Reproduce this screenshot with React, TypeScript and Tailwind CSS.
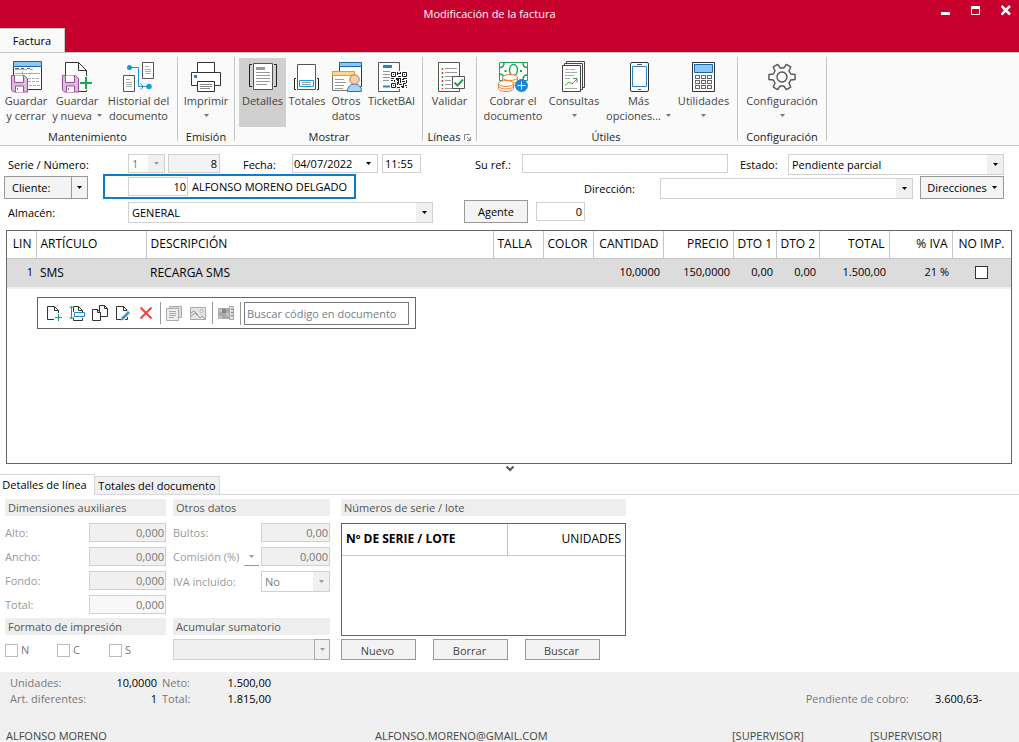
import type { ReactNode } from "react"
import clsx from "clsx"

// ---------------------------------------------------------------- icons

function Icon({ size = 32, children }: { size?: number; children: ReactNode }) {
  return (
    <svg width={size} height={size} viewBox={`0 0 ${size} ${size}`} fill="none" className="shrink-0" aria-hidden="true">
      {children}
    </svg>
  )
}

function Floppy() {
  return (
    <g stroke="#9c4f9f">
      <path d="M1.500 14.500h13l3 3v13.500h-14l-2-2z" fill="#dfbadf" />
      <path d="M4.500 14.500v7h9v-7" fill="#fff" />
      <path d="M5.500 31v-6h8v6" fill="#fff" />
      <path d="M7.500 27v2" stroke="#777" />
    </g>
  )
}

function SaveCloseIcon() {
  return (
    <Icon>
      <path d="M3.500 5.500v23h28v-23" fill="#fff" stroke="#333" />
      <path d="M3.500.5h28v5h-28z" fill="#8fc6ee" stroke="#1565b0" />
      <path d="M5 8.500h12M20 8.500h3M5 12.500h25M12.500 10v8" stroke="#aaa" />
      <path d="M5 7.500h4M11 7.500h3M17 7.500h3" stroke="#666" />
      <path d="M18 17.500h12M18 20.500h12M19 24.500h11" stroke="#aaa" strokeDasharray="3 1" />
      <Floppy />
    </Icon>
  )
}

function SaveNewIcon() {
  return (
    <Icon>
      <path d="M4.500 14v-12.500h13l8 8v21h-8" fill="#fff" stroke="#333" />
      <path d="M17.500 1.500v8h8z" fill="#fff" stroke="#333" />
      <Floppy />
      <path d="M18.500 22h13M25 15v14" stroke="#fafafa" strokeWidth="4" />
      <path d="M19 22h12M25 16v12" stroke="#18a754" strokeWidth="2" />
    </Icon>
  )
}

function HistoryIcon() {
  return (
    <Icon>
      <path d="M19.500 1.500h11v16h-11zM.5 14.500h11v16h-11z" fill="#fff" stroke="#555" />
      <path d="M22 5.500h4M22 8.500h6M22 10.500h6M22 12.500h6M3 18.500h4M3 21.500h6M3 23.500h6M3 25.500h6" stroke="#aaa" />
      <path d="M6.500 6.500h9v19h9M17.500 22.500l3 3-3 3" stroke="#129bdb" />
      <circle cx="6.500" cy="6.500" r="2.500" fill="#129bdb" />
      <circle cx="26" cy="25.500" r="2.700" fill="#129bdb" />
    </Icon>
  )
}

function PrintIcon() {
  return (
    <Icon>
      <path d="M7.500 1.500h17v10h-17zM1.500 11.500h29v13h-29z" fill="#fff" stroke="#333" />
      <path d="M7.500 20.500h17v10h-17z" fill="#fff" stroke="#333" />
      <path d="M10 23.500h12M10 25.500h12M10 27.500h10" stroke="#888" />
      <path d="M4 14h3v3H4z" fill="#1f86cf" />
    </Icon>
  )
}

function DetailsIcon() {
  return (
    <Icon>
      <path d="M6.500 2.500h19v26h-19z" fill="#fff" stroke="#555" />
      <path d="M5 3.500H2.500v22H5M27 3.500h2.500v22H27" stroke="#222" />
      <path d="M9 6h9v3H9z" fill="#999" />
      <path d="M9 11.500h14M9 14.500h14M9 17.500h14M9 20.500h14M9 23.500h11" stroke="#999" />
    </Icon>
  )
}

function TotalsIcon() {
  return (
    <Icon>
      <path d="M6.500 3.500h18v25h-18z" fill="#fff" stroke="#555" />
      <path d="M5 17.500H3.500v11H5M26 17.500h1.500v11H26" stroke="#222" />
      <path d="M8.500 19.500h14v6h-14z" stroke="#129bdb" />
      <path d="M11 21.500h9M11 23.500h9" stroke="#999" />
    </Icon>
  )
}

function OtherDataIcon() {
  return (
    <Icon>
      <path d="M9.500 5.500h22v20h-22z" fill="#fff" stroke="#333" />
      <path d="M9.500 1.500h22v4h-22z" fill="#8fc6ee" stroke="#1565b0" />
      <path d="M2.500 10.500h22v19h-22z" fill="#fff" stroke="#777" />
      <path d="M2.500 10.500h22v4h-22z" fill="#fbd98b" stroke="#d9a13a" />
      <path d="M5 18.500h9M5 21.500h11M5 24.500h9M5 27.500h8" stroke="#999" />
      <path d="M17.500 30.500c0-5 3-7.500 7-7.500s7 2.500 7 7.500z" fill="#a9d3f2" stroke="#2d77b5" />
      <circle cx="24.500" cy="18.500" r="4.700" fill="#f9cfb2" stroke="#b8734c" />
    </Icon>
  )
}

function TicketBaiIcon() {
  return (
    <Icon>
      <path d="M2.500 1.500h21v29h-21z" fill="#fff" stroke="#555" />
      <path d="M7 4h9v3H7z" fill="#1f86cf" />
      <path d="M7 10.500h11M7 13.500h8M7 16.500h7M7 19.500h6" stroke="#999" />
      <path d="M7 25.500h8" stroke="#1f86cf" strokeWidth="2" />
      <path d="M14 10h18v18H14z" fill="#fff" />
      <g stroke="#222">
        <path d="M15.500 11.500h4v4h-4zM26.500 11.500h4v4h-4zM15.500 22.500h4v4h-4z" />
        <path d="M17 13.500h1M28 13.500h1M17 24.500h1M21.500 11v3M24.500 11v2M22 15.500h3M15 17.500h3M20 17.500h5M27 17.500h4M15 19.500h2M18.500 19v2M21 19.500h2M24.500 18v4M26 20.500h3M30.500 19v3M21.500 21v3M23 23.500h3M27.500 22v3M29 24.500h2M21 26.500h3M26 26.500h2M30 26.500h1" />
        <path d="M20 18.500h3M26 18.500h2M22.500 19v4M28 22.500h2M25 25.500h3M22 12.500h2" />
      </g>
    </Icon>
  )
}

function ValidateIcon() {
  return (
    <Icon>
      <path d="M4.500 1.500h21v29h-21z" fill="#fff" stroke="#555" />
      <path d="M11 7.500h12M11 11.500h12M11 15.500h8M11 19.500h6M11 23.500h6M11 27.500h10" stroke="#999" />
      <path d="M8.500 7v2M8.500 15v2M8.500 23v2" stroke="#18a754" strokeWidth="1.500" />
      <path d="M8.500 11v2M8.500 19v2M8.500 27v1" stroke="#d23" strokeWidth="1.500" />
      <path d="M18.500 15.500h12v12h-12z" fill="#fff" stroke="#555" />
      <path d="M20.500 21.500l3 3 5.500-6" stroke="#18a754" strokeWidth="2" />
    </Icon>
  )
}

function CashIcon() {
  return (
    <Icon>
      <path d="M2.500 1.500h28v18h-28z" fill="#fff" stroke="#18a754" />
      <path d="M3 6.500c3 0 4-2 4-4.500M30 6.500c-3 0-4-2-4-4.500M3 13c2 0 3 1 3.500 2.500M30 14c-3 0-4 2-4 5" stroke="#18a754" strokeWidth="1.500" />
      <ellipse cx="16.500" cy="9" rx="4" ry="5.500" stroke="#18a754" strokeWidth="1.500" />
      <path d="M7.500 9h2v2h-2zM23 9h2v2h-2z" fill="#18a754" />
      <g fill="#fff" stroke="#ee7d31">
        <path d="M5.500 16.500v5.500c1 4 14 4 15 0v-5.500z" />
        <path d="M5.500 19.500c1 4 14 4 15 0" />
        <ellipse cx="13" cy="16.500" rx="7.500" ry="3" />
        <path d="M1.500 22.500v5c1 4 14 4 15 0v-5z" />
        <path d="M1.500 25c1 4 14 4 15 0" />
        <ellipse cx="9" cy="22.500" rx="7.500" ry="3" />
      </g>
      <circle cx="24.500" cy="24.500" r="6.500" fill="#1f86cf" />
      <path d="M20.500 24.500h8M24.500 20.500v8" stroke="#fff" />
    </Icon>
  )
}

function ReportsIcon() {
  return (
    <Icon>
      <path d="M8.500.5h18v26h-18z" fill="#fff" stroke="#444" />
      <path d="M6.500 2.500h18v26h-18z" fill="#fff" stroke="#444" />
      <path d="M4.500 4.500h18v26h-18z" fill="#fff" stroke="#444" />
      <path d="M7 8.500h4M12 8.500h5M7 11.500h12M7 14.500h9M7 17.500h5M7 27.500h12" stroke="#aaa" />
      <path d="M7 24.500l4-3.500 3 2 5-5M15 17.500h4v4" stroke="#3aaa35" />
    </Icon>
  )
}

function PhoneIcon() {
  return (
    <Icon>
      <rect x="7.500" y="1.500" width="18" height="29" rx="1.500" fill="#fff" stroke="#333" />
      <path d="M9.500 5.500h14v20h-14z" stroke="#1f86cf" />
      <path d="M14 3.500h5M15 28.500h3" stroke="#555" />
    </Icon>
  )
}

function CalculatorIcon() {
  return (
    <Icon>
      <path d="M4.500 1.500h22v29h-22z" fill="#fff" stroke="#333" />
      <path d="M6.500 3.500h18v8h-18z" fill="#8fc6ee" stroke="#1565b0" />
      {[14.5, 19.5, 24.5].map((y) =>
        [7.5, 13.5, 19.5].map((x) => <rect key={`${x}-${y}`} x={x} y={y} width="4" height="3" stroke="#666" />),
      )}
    </Icon>
  )
}

// Six-toothed gear outline
const gearPath = (() => {
  const points: string[] = []
  for (let i = 0; i < 6; i++) {
    const steps: [number, number][] = [[-19, 9.2], [-11, 13.3], [11, 13.3], [19, 9.2]]
    for (const [angle, radius] of steps) {
      const a = ((i * 60 + angle) * Math.PI) / 180
      points.push(`${(16 + radius * Math.cos(a)).toFixed(2)} ${(16 + radius * Math.sin(a)).toFixed(2)}`)
    }
  }
  return `M${points.join("L")}Z`
})()

function GearIcon() {
  return (
    <Icon>
      <path d={gearPath} stroke="#555" strokeWidth="1.400" strokeLinejoin="round" />
      <circle cx="16" cy="16" r="5" stroke="#555" strokeWidth="1.400" />
    </Icon>
  )
}

function Caret({ className = "text-black" }: { className?: string }) {
  return (
    <svg width="5" height="3" viewBox="0 0 5 3" className={clsx("shrink-0", className)} aria-hidden="true">
      <path d="M0 0h5L2.500 3z" fill="currentColor" />
    </svg>
  )
}

// ---------------------------------------------------------------- ribbon

type RibbonItem = {
  lines: string[]
  icon: ReactNode
  width: string
  caret?: boolean
  active?: boolean
}

type RibbonGroupData = { title: string; items: RibbonItem[]; launcher?: boolean; padding: string }

const ribbon: RibbonGroupData[] = [
  {
    title: "Mantenimiento",
    padding: "pr-[2px]",
    items: [
      { lines: ["Guardar", "y cerrar"], icon: <SaveCloseIcon />, width: "w-[52px]" },
      { lines: ["Guardar", "y nueva"], icon: <SaveNewIcon />, width: "w-[50px]", caret: true },
      { lines: ["Historial del", "documento"], icon: <HistoryIcon />, width: "w-[73px]" },
    ],
  },
  {
    title: "Emisión",
    padding: "px-1",
    items: [{ lines: ["Imprimir"], icon: <PrintIcon />, width: "w-[48px]", caret: true }],
  },
  {
    title: "Mostrar",
    padding: "pl-1 pr-[3px]",
    items: [
      { lines: ["Detalles"], icon: <DetailsIcon />, width: "w-[47px]", active: true },
      { lines: ["Totales"], icon: <TotalsIcon />, width: "w-[42px]" },
      { lines: ["Otros", "datos"], icon: <OtherDataIcon />, width: "w-[36px]" },
      { lines: ["TicketBAI"], icon: <TicketBaiIcon />, width: "w-[55px]" },
    ],
  },
  {
    title: "Líneas",
    padding: "px-1",
    launcher: true,
    items: [{ lines: ["Validar"], icon: <ValidateIcon />, width: "w-[45px]" }],
  },
  {
    title: "Útiles",
    padding: "pl-[3px] pr-[5px]",
    items: [
      { lines: ["Cobrar el", "documento"], icon: <CashIcon />, width: "w-[66px]" },
      { lines: ["Consultas"], icon: <ReportsIcon />, width: "w-[56px]", caret: true },
      { lines: ["Más", "opciones..."], icon: <PhoneIcon />, width: "w-[73px]", caret: true },
      { lines: ["Utilidades"], icon: <CalculatorIcon />, width: "w-[57px]", caret: true },
    ],
  },
  {
    title: "Configuración",
    padding: "px-1",
    items: [{ lines: ["Configuración"], icon: <GearIcon />, width: "w-[80px]", caret: true }],
  },
]

function RibbonButton({ item }: { item: RibbonItem }) {
  return (
    <button
      type="button"
      className={clsx(
        "flex h-[69px] flex-col items-center whitespace-nowrap pt-[3px] leading-[15px] text-[#444]",
        item.width,
        item.active && "bg-[#d0d0d0]",
      )}
    >
      {item.icon}
      <span>{item.lines[0]}</span>
      <span className="flex h-[15px] items-center gap-[5px]">
        {item.lines[1]}
        {item.caret && <Caret className="text-[#777]" />}
      </span>
    </button>
  )
}

function Ribbon() {
  return (
    <nav className="flex h-[94px] border-y border-[#c6c6c6] bg-[#fafafa] py-1">
      {ribbon.map((group) => (
        <section key={group.title} className={clsx("flex flex-col border-r border-[#c6c6c6] pt-px", group.padding)}>
          <div className="flex">
            {group.items.map((item) => (
              <RibbonButton key={item.lines.join(" ")} item={item} />
            ))}
          </div>
          <h2 className="flex items-center justify-center gap-1 pt-[2px] leading-4 text-[#222]">
            {group.title}
            {group.launcher && (
              <button type="button" aria-label="Más opciones de líneas">
                <svg width="7" height="7" viewBox="0 0 7 7" fill="none" stroke="#888">
                  <path d="M.5 6V.5H6M3 3l3.500 3.500M6.500 3v3.500H3" />
                </svg>
              </button>
            )}
          </h2>
        </section>
      ))}
    </nav>
  )
}

// ---------------------------------------------------------------- form controls

const fieldClass = "h-[19px] border border-[#d0d0d0] px-[2px] leading-4 outline-none"
const buttonClass = "border border-[#999] bg-[#f3f3f3]"

type ComboProps = { id: string; value: string; className?: string; disabled?: boolean; label?: string; boxed?: boolean }

function Combo({ id, value, className, disabled, label, boxed }: ComboProps) {
  return (
    <span className={clsx("relative flex h-[21px] border border-[#d0d0d0] bg-white", className)}>
      <select
        id={id}
        aria-label={label}
        disabled={disabled}
        defaultValue={value}
        className={clsx("h-full w-full appearance-none pl-[3px] outline-none", disabled && "text-[#777] opacity-100")}
      >
        <option>{value}</option>
      </select>
      <span
        className={clsx(
          "pointer-events-none absolute right-0 flex w-4 items-center justify-center bg-[#f0f0f0]",
          boxed ? "-inset-y-px -mr-px border border-[#aaa]" : "inset-y-0",
        )}
      >
        <Caret className={disabled ? "text-[#999]" : "text-black"} />
      </span>
    </span>
  )
}

function InvoiceForm() {
  return (
    <form className="flex flex-col pl-1 pr-[15px] pt-2">
      <div className="flex h-5 items-start">
        <label htmlFor="serie" className="w-[124px] pl-1 leading-[22px]">Serie / Número:</label>
        <Combo id="serie" value="1" disabled className="h-[19px]! w-[37px]" />
        <input aria-label="Número" defaultValue="8" readOnly className={clsx(fieldClass, "ml-[3px] w-[52px] bg-[#f3f3f3] text-right")} />
        <label htmlFor="fecha" className="ml-[23px] w-[49px] leading-[22px]">Fecha:</label>
        <span className="flex h-[19px] w-[86px] border border-[#d0d0d0]">
          <input id="fecha" defaultValue="04/07/2022" className="w-full min-w-0 pl-px leading-4 outline-none" />
          <button type="button" aria-label="Abrir calendario" className="flex w-[18px] shrink-0 items-center justify-center">
            <Caret />
          </button>
        </span>
        <input aria-label="Hora" defaultValue="11:55" className={clsx(fieldClass, "ml-1 w-[39px]")} />
        <label htmlFor="ref" className="ml-[54px] w-[47px] leading-[22px]">Su ref.:</label>
        <input id="ref" className={clsx(fieldClass, "min-w-0 flex-1")} />
        <label htmlFor="estado" className="ml-3 w-12 leading-[22px]">Estado:</label>
        <Combo id="estado" value="Pendiente parcial" className="w-[216px]" />
      </div>

      <div className="flex h-[25px] items-end">
        <span className={clsx(buttonClass, "flex h-[23px] w-[84px]")}>
          <button type="button" className="flex-1 pl-[7px] text-left">Cliente:</button>
          <button type="button" aria-label="Opciones de cliente" className="flex w-4 items-center justify-center border-l border-[#999]">
            <Caret />
          </button>
        </span>
        <span className="ml-[15px] flex h-[25px] w-[253px] items-center border-2 border-[#0a7fc4] pl-[23px]">
          <input aria-label="Código de cliente" defaultValue="10" className={clsx(fieldClass, "w-[60px] pr-px text-right")} />
          <span className="ml-1 whitespace-nowrap">ALFONSO MORENO DELGADO</span>
        </span>
        <label htmlFor="direccion" className="ml-[228px] w-[76px] leading-5">Dirección:</label>
        <Combo id="direccion" value="" className="min-w-0 flex-1" />
        <button type="button" className={clsx(buttonClass, "ml-[7px] flex h-[23px] w-[84px] items-center justify-center gap-[5px]")}>
          Direcciones
          <Caret />
        </button>
      </div>

      <div className="mt-px flex h-[23px] items-start">
        <label htmlFor="almacen" className="w-[124px] pl-1 pt-[2px] leading-[22px]">Almacén:</label>
        <Combo id="almacen" value="GENERAL" className="mt-[2px] w-[305px]" />
        <button type="button" className={clsx(buttonClass, "ml-[31px] h-[23px] w-16")}>Agente</button>
        <input aria-label="Código de agente" defaultValue="0" className={clsx(fieldClass, "ml-2 mt-[2px] w-[49px] text-right")} />
      </div>
    </form>
  )
}

// ---------------------------------------------------------------- lines grid

const columns = [
  { name: "LIN", width: "w-[29px]", value: "1", right: true },
  { name: "ARTÍCULO", width: "w-[110px]", value: "SMS" },
  { name: "DESCRIPCIÓN", width: "", value: "RECARGA SMS" },
  { name: "TALLA", width: "w-[50px]", value: "" },
  { name: "COLOR", width: "w-[50px]", value: "" },
  { name: "CANTIDAD", width: "w-[70px]", value: "10,0000", right: true },
  { name: "PRECIO", width: "w-[70px]", value: "150,0000", right: true },
  { name: "DTO 1", width: "w-[43px]", value: "0,00", right: true },
  { name: "DTO 2", width: "w-[43px]", value: "0,00", right: true },
  { name: "TOTAL", width: "w-[70px]", value: "1.500,00", right: true },
  { name: "% IVA", width: "w-[63px]", value: "21 %", right: true },
  { name: "NO IMP.", width: "w-[59px]", value: "check" },
]

const page = "M1.500 1.500h7l4 4v9h-11zM8.500 1.500v4h4"

const lineTools = [
  {
    label: "Nueva línea",
    icon: (
      <>
        <path d="M12.500 8V5.500l-4-4h-7v13H8M8.500 1.500v4h4" stroke="#333" />
        <path d="M9 12.500h7M12.500 9v7" stroke="#18a754" />
      </>
    ),
  },
  {
    label: "Insertar línea",
    icon: (
      <>
        <path d="M4.500 7V1.500h5l4 4V7M9.500 1.500v4h4M4.500 13v2.500h9V13" stroke="#333" />
        <path d="M5.500 7.500h10v4h-10z" fill="#fff" stroke="#1f86cf" />
        <path d="M2.500 1v13M0 3.500L2.500 1 5 3.500M0 11.500L2.500 14 5 11.500" stroke="#18a754" />
      </>
    ),
  },
  {
    label: "Duplicar línea",
    icon: (
      <>
        <path d="M7.500 .5h5l3 3v8h-8zM12.500 .5v3h3" fill="#fff" stroke="#333" />
        <path d="M.5 4.500h5l3 3v8h-8zM5.500 4.500v3h3" fill="#fff" stroke="#333" />
      </>
    ),
  },
  {
    label: "Editar línea",
    icon: (
      <>
        <path d={page} stroke="#333" />
        <path d="M7 14l7-7" stroke="#fff" strokeWidth="5" />
        <path d="M7 14l7-7" stroke="#3d8fd0" strokeWidth="2.500" />
        <path d="M5.500 15.500l.5-2 1.500 1.500z" fill="#3d8fd0" />
      </>
    ),
  },
  { label: "Borrar línea", icon: <path d="M2.500 2.500l11 11M13.500 2.500l-11 11" stroke="#f04438" strokeWidth="2" /> },
  {
    label: "Ver notas",
    icon: (
      <>
        <path d="M3.500 1.500h12v11h-12z" fill="#ddd" stroke="#aaa" />
        <path d="M.5 3.500h12v12H.5z" fill="#eee" stroke="#aaa" />
        <path d="M3 6.500h7M3 8.500h7M3 10.500h7M3 12.500h5" stroke="#aaa" />
      </>
    ),
  },
  {
    label: "Ver imagen",
    icon: (
      <>
        <path d="M.5 2.500h15v12H.5z" fill="#e4e4e4" stroke="#aaa" />
        <path d="M1 11l4-3 5 5 2-2 3 3M1 8l3-2 4 4" stroke="#999" />
        <circle cx="11.500" cy="6" r="1.500" fill="#fff" stroke="#aaa" />
      </>
    ),
  },
  {
    label: "Tallas y colores",
    icon: (
      <>
        <path d="M0 3h11v11H0z" fill="#aaa" />
        <path d="M1 4h3v3H1zM8 8h3v3H8zM1 11h3v3H1z" fill="#c4c4c4" />
        <path d="M4 4h4v4H4z" fill="#888" />
        <path d="M11.500 1.500h4v13h-4z" fill="#ddd" stroke="#aaa" />
        <path d="M13 4.500h2M13 7.500h2M13 10.500h2" stroke="#888" />
      </>
    ),
  },
]

function LinesGrid() {
  return (
    <section className="ml-[6px] mr-[7px] mt-[7px] h-[234px] border border-[#666]">
      <table className="w-full table-fixed border-collapse text-xs">
        <thead>
          <tr className="h-[27px] border-b border-[#c6c6c6]">
            {columns.map((col) => (
              <th
                key={col.name}
                className={clsx(
                  "whitespace-nowrap border-r border-[#c6c6c6] px-1 font-normal last:border-r-0 last:pl-[6px]",
                  col.width,
                  col.right ? "text-right" : "text-left",
                )}
              >
                {col.name}
              </th>
            ))}
          </tr>
        </thead>
        <tbody>
          <tr className="h-[30px] border-b-2 border-[#f0f0f0] bg-[#dcdcdc]">
            {columns.map((col) => (
              <td key={col.name} className={clsx("whitespace-nowrap px-1", col.right && "pr-[3px] text-right text-[11px]")}>
                {col.value === "check" ? (
                  <input
                    type="checkbox"
                    aria-label="No imprimir"
                    className="mx-auto block size-[13px] appearance-none border border-[#333] bg-white"
                  />
                ) : (
                  col.value
                )}
              </td>
            ))}
          </tr>
        </tbody>
      </table>

      <div className="ml-[30px] mt-2 flex h-8 w-[379px] items-center border border-[#666] pl-1">
        {lineTools.map((tool, index) => (
          <button
            key={tool.label}
            type="button"
            aria-label={tool.label}
            disabled={index > 4}
            className={clsx(
              "flex h-[22px] w-[23px] items-center justify-center",
              (index === 5 || index === 7) && "ml-[3px] w-[26px]! border-l border-[#999]",
            )}
          >
            <Icon size={16}>{tool.icon}</Icon>
          </button>
        ))}
        <span className="ml-[2px] border-l border-[#999] pl-[3px]">
          <input
            type="text"
            aria-label="Buscar código en documento"
            placeholder="Buscar código en documento"
            className="block h-[23px] w-[165px] border border-[#777] px-[2px] outline-none placeholder:text-[#708090]"
          />
        </span>
      </div>
    </section>
  )
}

// ---------------------------------------------------------------- detail panels

function PanelTitle({ children }: { children: ReactNode }) {
  return <h3 className="h-[17px] bg-[#eee] pl-[3px] leading-[18px] text-[#555]">{children}</h3>
}

type DetailFieldProps = { id: string; label: string; value: string; width: string; caret?: boolean; background?: string }

function DetailField({ id, label, value, width, caret, background = "bg-[#f0f0f0]" }: DetailFieldProps) {
  return (
    <div className="flex h-[19px] items-center">
      <label htmlFor={id} className="flex-1 leading-[22px] text-[#999]">{label}</label>
      {caret && (
        <button type="button" aria-label="Opciones de comisión" className="mr-[2px] flex h-[19px] w-[15px] items-center justify-center border-b border-[#999]">
          <Caret className="text-[#999]" />
        </button>
      )}
      <input id={id} defaultValue={value} disabled className={clsx(fieldClass, "pr-px text-right text-[#777]", background, width)} />
    </div>
  )
}

function DetailPanels() {
  return (
    <div className="flex h-[177px] items-start pl-[5px] pt-1">
      <div className="w-[161px]">
        <PanelTitle>Dimensiones auxiliares</PanelTitle>
        <div className="flex flex-col gap-[5px] pt-[7px]">
          <DetailField id="alto" label="Alto:" value="0,000" width="w-[77px]" />
          <DetailField id="ancho" label="Ancho:" value="0,000" width="w-[77px]" />
          <DetailField id="fondo" label="Fondo:" value="0,000" width="w-[77px]" />
          <DetailField id="total" label="Total:" value="0,000" width="w-[77px]" background="bg-[#f8f8f8]" />
        </div>
        <div className="pt-1">
          <PanelTitle>Formato de impresión</PanelTitle>
        </div>
        <div className="flex pt-2">
          {["N", "C", "S"].map((name) => (
            <label key={name} className="flex w-[52px] items-center gap-[3px] leading-[14px] text-[#777]">
              <input type="checkbox" disabled className="size-[13px] appearance-none border border-[#bbb]" />
              {name}
            </label>
          ))}
        </div>
      </div>

      <div className="ml-[7px] w-[157px]">
        <PanelTitle>Otros datos</PanelTitle>
        <div className="flex h-[102px] flex-col gap-[5px] pt-[7px]">
          <DetailField id="bultos" label="Bultos:" value="0,00" width="w-[69px]" />
          <DetailField id="comision" label="Comisión (%)" value="0,000" width="w-[69px]" caret />
          <div className="flex items-center">
            <label htmlFor="iva" className="flex-1 text-[#999]">IVA incluido:</label>
            <Combo id="iva" value="No" disabled className="w-[69px]" />
          </div>
        </div>
        <PanelTitle>Acumular sumatorio</PanelTitle>
        <Combo id="sumatorio" label="Acumular sumatorio" value="" disabled boxed className="mt-1 bg-[#f0f0f0]!" />
      </div>

      <div className="ml-[11px] w-[285px]">
        <PanelTitle>Números de serie / lote</PanelTitle>
        <div className="mt-[7px] h-[113px] border border-[#666]">
          <table className="w-full table-fixed border-collapse text-xs">
            <thead>
              <tr className="h-[31px] border-b border-[#c6c6c6]">
                <th className="w-[165px] border-r border-[#c6c6c6] px-1 text-left font-bold">Nº DE SERIE / LOTE</th>
                <th className="px-1 text-right font-normal">UNIDADES</th>
              </tr>
            </thead>
          </table>
        </div>
        <div className="flex gap-[17px] pt-[3px] text-[#444]">
          {["Nuevo", "Borrar", "Buscar"].map((name) => (
            <button key={name} type="button" className={clsx(buttonClass, "h-[21px] w-[75px] pt-[2px] pr-[2px]")}>
              {name}
            </button>
          ))}
        </div>
      </div>
    </div>
  )
}

export default function App() {
  return (
    <main className="flex min-h-screen flex-col bg-white font-['Open_Sans',sans-serif] text-[11px] leading-4 text-black">
      <header className="flex h-[52px] flex-col justify-between bg-[#c8002d]">
        <div className="flex h-7 text-white">
          <h1 className="flex-1 pl-[38px] text-center leading-7">Modificación de la factura</h1>
          <div className="flex items-start gap-5 pr-2 pt-[5px]">
            <button type="button" aria-label="Minimizar">
              <svg width="10" height="11" viewBox="0 0 10 11"><path d="M0 7h9v3H0z" fill="#fff" /></svg>
            </button>
            <button type="button" aria-label="Maximizar">
              <svg width="10" height="11" viewBox="0 0 10 11" fill="none" stroke="#fff"><path d="M.5 1.500h8v8h-8zM0 2.500h9M0 3.500h9" /></svg>
            </button>
            <button type="button" aria-label="Cerrar">
              <svg width="10" height="11" viewBox="0 0 10 11" fill="none" stroke="#fff" strokeWidth="2.500"><path d="M.5 1l8.500 8.500M9 1L.5 9.500" /></svg>
            </button>
          </div>
        </div>
        <button type="button" className="-mb-px h-[25px] w-[65px] border-r border-t border-[#c6c6c6] bg-[#fafafa]">
          Factura
        </button>
      </header>

      <Ribbon />
      <InvoiceForm />
      <LinesGrid />

      <div className="flex h-[10px] items-center justify-center">
        <svg width="8" height="6" viewBox="0 0 8 6" fill="none" stroke="#555" strokeWidth="2"><path d="M.5.5l3.500 3.500L7.500.5" /></svg>
      </div>

      <div className="flex h-[21px] items-end">
        <button type="button" className="h-full w-[95px] whitespace-nowrap border-r border-t border-[#d8d8d8] pr-[5px] text-center">
          Detalles de línea
        </button>
        <div className="flex h-[19px] flex-1 border-b border-[#d8d8d8]">
          <button type="button" className="w-[125px] whitespace-nowrap border-r border-t border-[#d8d8d8] bg-[#f0f0f0]">
            Totales del documento
          </button>
        </div>
      </div>

      <DetailPanels />

      <footer className="flex flex-1 flex-col justify-between bg-[#f0f0f0]">
        <div className="flex items-end pl-[10px] pr-[37px] pt-[3px]">
          <dl className="grid grid-cols-[92px_50px_30px_74px] gap-x-[5px] text-[#777]">
            <dt>Unidades:</dt>
            <dd className="text-right text-black">10,0000</dd>
            <dt>Neto:</dt>
            <dd className="text-right text-black">1.500,00</dd>
            <dt>Art. diferentes:</dt>
            <dd className="text-right text-black">1</dd>
            <dt>Total:</dt>
            <dd className="text-right text-black">1.815,00</dd>
          </dl>
          <dl className="ml-auto flex gap-[26px] text-[#777]">
            <dt>Pendiente de cobro:</dt>
            <dd className="text-black">3.600,63-</dd>
          </dl>
        </div>
        <div className="flex h-[14px] pl-[6px] text-[#444]">
          <span className="w-[369px]">ALFONSO MORENO</span>
          <span className="flex-1">ALFONSO.MORENO@GMAIL.COM</span>
          <span className="w-[138px]">[SUPERVISOR]</span>
          <span className="w-[149px]">[SUPERVISOR]</span>
        </div>
      </footer>
    </main>
  )
}
